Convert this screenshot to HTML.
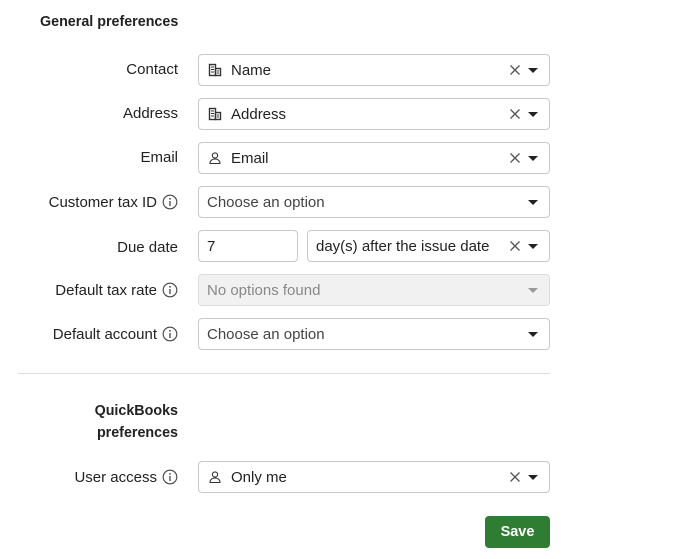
<!DOCTYPE html>
<html><head><style>
body{margin:0;width:680px;height:559px;background:#fff;font-family:"Liberation Sans",sans-serif;font-size:15px;color:#222;position:relative;overflow:hidden}
.a{position:absolute}
.h{font-weight:bold;font-size:14.3px}
.lbl{position:absolute;right:502px;text-align:right;white-space:nowrap;line-height:16px}
.box{position:absolute;border:1px solid #c8c8c8;border-radius:4px;background:#fff;box-sizing:border-box;height:32px}
.box span{position:absolute;left:8px;top:7px;line-height:17px;white-space:nowrap}
.ico{position:absolute;left:9px;top:8px}
.arr{position:absolute;right:11px;top:13px;width:0;height:0;border-left:5px solid transparent;border-right:5px solid transparent;border-top:5px solid #222}
.x{position:absolute;right:28px;top:9px}
.i{display:inline-block;vertical-align:-3px;margin-left:5px}
</style></head><body>
<div class="a h" style="left:40px;top:14px">General preferences</div>

<svg width="0" height="0" style="position:absolute"><defs>
<symbol id="bld" viewBox="0 0 14 14"><rect x="1.5" y="1.5" width="6" height="11" fill="none" stroke="#333" stroke-width="1.4"/><rect x="7.5" y="5.5" width="5" height="7" fill="none" stroke="#333" stroke-width="1.4"/><path d="M3 4h3M3 6.5h3M3 9h3M9 8h2M9 10h2" stroke="#333" stroke-width="1.1"/></symbol>
<symbol id="usr" viewBox="0 0 14 14"><circle cx="7" cy="4.5" r="2.6" fill="none" stroke="#333" stroke-width="1.1"/><path d="M2 12.5c0-3 2.3-4.5 5-4.5s5 1.5 5 4.5z" fill="none" stroke="#333" stroke-width="1.1"/></symbol>
<symbol id="x" viewBox="0 0 12 12"><path d="M1.5 1.5l9 9M10.5 1.5l-9 9" stroke="#555" stroke-width="1.3"/></symbol>
<symbol id="inf" viewBox="0 0 16 16"><circle cx="8" cy="8" r="6.8" fill="none" stroke="#444" stroke-width="1.1"/><circle cx="8" cy="4.9" r="0.9" fill="#444"/><path d="M8 7v5" stroke="#444" stroke-width="1.3"/></symbol>
</defs></svg>

<div class="lbl" style="top:62px">Contact</div>
<div class="box" style="left:198px;top:54px;width:352px"><svg class="ico" width="14" height="14"><use href="#bld"/></svg><span style="left:32px">Name</span><svg class="x" width="12" height="12"><use href="#x"/></svg><div class="arr"></div></div>

<div class="lbl" style="top:106px">Address</div>
<div class="box" style="left:198px;top:98px;width:352px"><svg class="ico" width="14" height="14"><use href="#bld"/></svg><span style="left:32px">Address</span><svg class="x" width="12" height="12"><use href="#x"/></svg><div class="arr"></div></div>

<div class="lbl" style="top:150px">Email</div>
<div class="box" style="left:198px;top:142px;width:352px"><svg class="ico" width="14" height="14"><use href="#usr"/></svg><span style="left:32px">Email</span><svg class="x" width="12" height="12"><use href="#x"/></svg><div class="arr"></div></div>

<div class="lbl" style="top:194px">Customer tax ID<svg class="i" width="16" height="16"><use href="#inf"/></svg></div>
<div class="box" style="left:198px;top:186px;width:352px"><span style="color:#444">Choose an option</span><div class="arr"></div></div>

<div class="lbl" style="top:240px">Due date</div>
<div class="box" style="left:198px;top:230px;width:100px"><span>7</span></div>
<div class="box" style="left:307px;top:230px;width:243px"><span>day(s) after the issue date</span><svg class="x" width="12" height="12"><use href="#x"/></svg><div class="arr"></div></div>

<div class="lbl" style="top:282px">Default tax rate<svg class="i" width="16" height="16"><use href="#inf"/></svg></div>
<div class="box" style="left:198px;top:274px;width:352px;background:#f1f1f1;border-color:#ddd"><span style="color:#888">No options found</span><div class="arr" style="border-top-color:#999"></div></div>

<div class="lbl" style="top:326px">Default account<svg class="i" width="16" height="16"><use href="#inf"/></svg></div>
<div class="box" style="left:198px;top:318px;width:352px"><span style="color:#444">Choose an option</span><div class="arr"></div></div>

<div class="a" style="left:18px;top:373px;width:532px;height:1px;background:#ddd"></div>

<div class="lbl h" style="top:400px;line-height:22px">QuickBooks<br>preferences</div>

<div class="lbl" style="top:469px">User access<svg class="i" width="16" height="16"><use href="#inf"/></svg></div>
<div class="box" style="left:198px;top:461px;width:352px"><svg class="ico" width="14" height="14"><use href="#usr"/></svg><span style="left:32px">Only me</span><svg class="x" width="12" height="12"><use href="#x"/></svg><div class="arr"></div></div>

<div class="a" style="left:485px;top:516px;width:65px;height:32px;background:#2e7d32;border-radius:4px;color:#fff;font-weight:bold;font-size:14.5px;text-align:center;line-height:32px">Save</div>
</body></html>
